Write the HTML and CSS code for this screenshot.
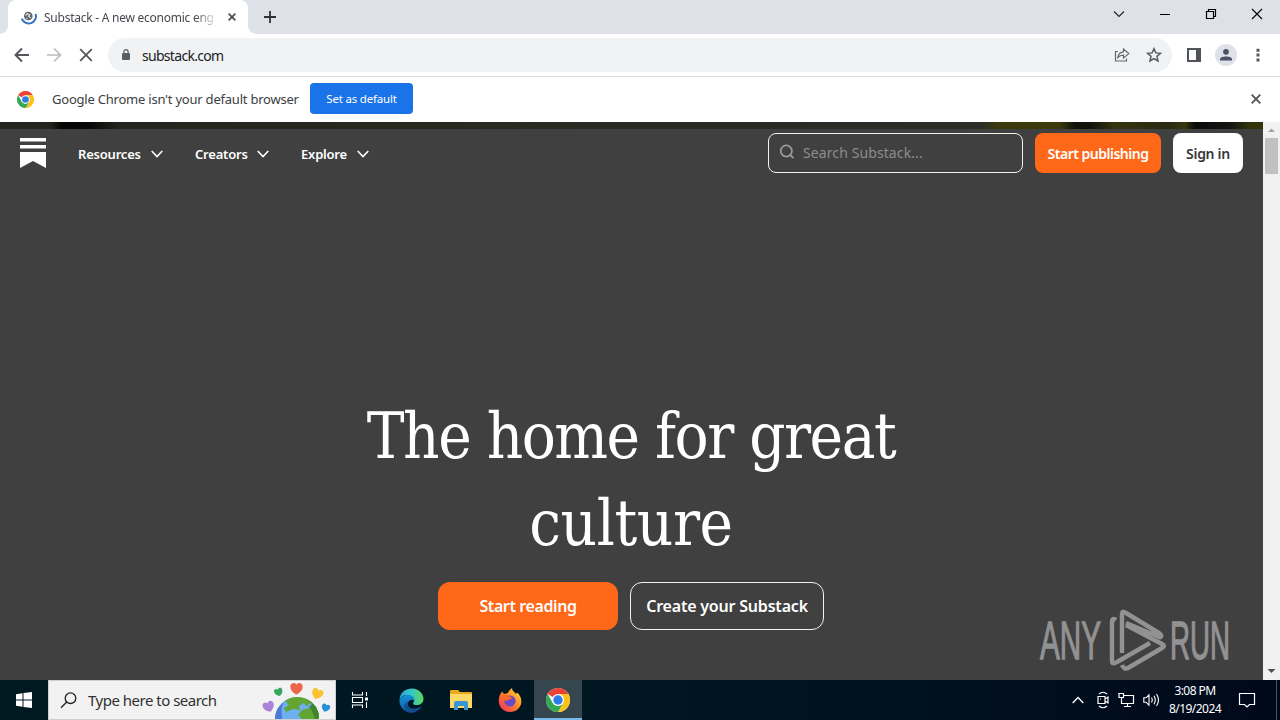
FILE: index.html
```html
<!DOCTYPE html>
<html lang="en">
<head>
    <meta charset="UTF-8">
    <meta name="viewport" content="width=device-width, initial-scale=1.0">
    <title>Substack - A new economic engine for culture</title>
    <link rel="stylesheet" href="styles.css">
</head>
<body>
    <svg class="defs" width="0" height="0">
        <symbol id="chrome" viewBox="0 0 24 24">
            <circle cx="12" cy="12" r="12" fill="#fff"/>
            <path d="M12 12 L1.6 6 A12 12 0 0 1 22.4 6 L12 6z" fill="#ea4335"/>
            <path d="M12 6 H22.4 A12 12 0 0 1 12 24 L17.2 15z" fill="#fbc116"/>
            <path d="M1.6 6 A12 12 0 0 0 12 24 L17.2 15 L12 18 L6.8 15z" fill="#34a853"/>
            <circle cx="12" cy="12" r="6" fill="#fff"/>
            <circle cx="12" cy="12" r="4.7" fill="#2b7de9"/>
        </symbol>
        <symbol id="chevron" viewBox="0 0 12 8">
            <path d="M.7 1 L6 6.5 L11.3 1" fill="none" stroke="currentColor" stroke-width="1.6"/>
        </symbol>
        <symbol id="heart" viewBox="0 0 12 12">
            <path d="M6 11.5 C3 10 .3 7.500 .3 4.300 C.3 .5 4.800 0 6 2.600 C7.200 0 11.700 .5 11.700 4.300 C11.700 7.500 9 10 6 11.500z" fill="currentColor"/>
        </symbol>
    </svg>

    <div class="tabstrip">
        <div class="tab">
            <svg width="16" height="16" viewBox="0 0 16 16">
                <circle cx="7.300" cy="7" r="4.300" fill="#5f6368"/>
                <path d="M4.500 6.500 l2 -1.800 l2.300 1 l-1.300 1.500 l2.200 1.600 M5 9 l1.500 .5" fill="none" stroke="#dfe1e5" stroke-width="1.200"/>
                <path d="M.8 9.500 A7 7 0 0 0 14.600 5" fill="none" stroke="#3674c9" stroke-width="2"/>
            </svg>
            <span class="tab-title">Substack - A new economic eng</span>
            <svg class="tab-close" width="8" height="8" viewBox="0 0 8 8"><path d="M.6 .6 L7.400 7.400 M7.400 .6 L.6 7.400" stroke="#45484d" stroke-width="1.600"/></svg>
        </div>
        <svg class="new-tab" width="12" height="12" viewBox="0 0 12 12"><path d="M6 0 V12 M0 6 H12" stroke="#303238" stroke-width="1.800"/></svg>
        <div class="window-buttons">
            <svg width="12" height="12" viewBox="0 0 12 12"><path d="M1 3.500 L6 8.500 L11 3.500" fill="none" stroke="#222" stroke-width="1.100"/></svg>
            <svg width="12" height="12" viewBox="0 0 12 12"><path d="M1 6.500 H11" stroke="#000"/></svg>
            <svg width="12" height="12" viewBox="0 0 12 12"><path d="M1.500 3.500 H8.500 V10.500 H1.500z M3.500 3.500 V1.500 H10.500 V8.500 H8.500" fill="none" stroke="#000" stroke-width="1.200"/></svg>
            <svg width="12" height="12" viewBox="0 0 12 12"><path d="M1 1 L11 11 M11 1 L1 11" stroke="#000" stroke-width="1.100"/></svg>
        </div>
    </div>

    <div class="toolbar">
        <div class="nav-buttons">
            <svg width="16" height="16" viewBox="0 0 16 16"><path d="M15 8 H2 M8 1.500 L1.500 8 L8 14.500" fill="none" stroke="#53565b" stroke-width="1.900"/></svg>
            <svg width="16" height="16" viewBox="0 0 16 16"><path d="M1 8 H14 M8 1.500 L14.500 8 L8 14.500" fill="none" stroke="#babcbe" stroke-width="1.700"/></svg>
            <svg width="16" height="16" viewBox="0 0 16 16"><path d="M2.200 2.200 L13.800 13.800 M13.800 2.200 L2.200 13.800" stroke="#53565b" stroke-width="1.800"/></svg>
        </div>
        <div class="omnibox">
            <svg width="8" height="12" viewBox="0 0 8 12"><rect y="4" width="8" height="7" rx="1" fill="#5a5d62"/><path d="M1.900 4.500 V2.800 a2.100 2.100 0 0 1 4.200 0 V4.500" fill="none" stroke="#5a5d62" stroke-width="1.200"/></svg>
            <span class="url">substack.com</span>
            <svg class="share" width="16" height="16" viewBox="0 0 16 16"><path d="M4 4.500 H1.500 V14 H12.500 V11.500 M3.800 10.500 C4.300 6.500 6.500 5 9.500 4.800 V2 L14.800 6.600 L9.500 11 V8.200 C7 8.200 5.300 8.800 3.800 10.500z" fill="none" stroke="#64676c" stroke-width="1.200"/></svg>
            <svg width="16" height="16" viewBox="0 0 16 16"><path d="M8 1.700 L9.900 5.900 L14.500 6.300 L11 9.300 L12 13.900 L8 11.500 L4 13.900 L5 9.300 L1.500 6.300 L6.100 5.900z" fill="none" stroke="#55585e" stroke-width="1.500"/></svg>
        </div>
        <svg class="panel" width="14" height="14" viewBox="0 0 14 14"><path d="M1 1 H13 V13 H1z" fill="none" stroke="#505359" stroke-width="2"/><path d="M9 1 H13 V13 H9z" fill="#505359"/></svg>
        <svg class="avatar" width="22" height="22" viewBox="0 0 22 22"><circle cx="11" cy="11" r="11" fill="#dee1e8"/><circle cx="11" cy="7.800" r="2.900" fill="#4b5266"/><path d="M5 16.500 V15 C5 11.500 17 11.500 17 15 V16.500z" fill="#4b5266"/></svg>
        <svg class="dots" width="4" height="14" viewBox="0 0 4 14"><path d="M.5 .8 h3 v3 h-3z M.5 5.600 h3 v3 h-3z M.5 10.400 h3 v3 h-3z" fill="#55585d"/></svg>
    </div>

    <div class="infobar">
        <svg width="17" height="17"><use href="#chrome"/></svg>
        <span class="info-text">Google Chrome isn't your default browser</span>
        <button class="default-button">Set as default</button>
        <svg class="info-close" width="10" height="10" viewBox="0 0 10 10"><path d="M.7 .7 L9.300 9.300 M9.300 .7 L.7 9.300" stroke="#505357" stroke-width="1.800"/></svg>
    </div>

    <div class="viewport">
        <main class="page">
            <div class="photo-strip"></div>
            <header class="header">
                <svg class="logo" width="26" height="30" viewBox="0 0 26 30"><path d="M0 0 H26 V3.500 H0z M0 7 H26 V10.500 H0z M0 14 H26 V30 L13 23 L0 30z" fill="#fff"/></svg>
                <nav class="menu">
                    <a class="menu-item resources">Resources <svg width="12" height="8"><use href="#chevron"/></svg></a>
                    <a class="menu-item creators">Creators <svg width="12" height="8"><use href="#chevron"/></svg></a>
                    <a class="menu-item explore">Explore <svg width="12" height="8"><use href="#chevron"/></svg></a>
                </nav>
                <div class="search">
                    <svg width="16" height="16" viewBox="0 0 16 16"><circle cx="7.300" cy="7" r="5.600" fill="none" stroke="#999" stroke-width="1.800"/><path d="M11.300 11 L14.500 14.200" stroke="#999" stroke-width="1.800"/></svg>
                    <span>Search Substack...</span>
                </div>
                <button class="button publish">Start publishing</button>
                <button class="button sign-in">Sign in</button>
            </header>
            <section class="hero">
                <h1><span class="line">The home for great</span><span class="line culture">culture</span></h1>
                <div class="actions">
                    <button class="action reading">Start reading</button>
                    <button class="action create">Create your Substack</button>
                </div>
            </section>
            <svg class="watermark" width="206" height="66" viewBox="0 0 206 66">
                <g fill="#929292" stroke="#929292" stroke-width="1.300">
                    <text x="2" y="51" textLength="61" lengthAdjust="spacingAndGlyphs">ANY</text>
                    <text x="132" y="51" textLength="60" lengthAdjust="spacingAndGlyphs">RUN</text>
                </g>
                <g fill="none" stroke="#929292" stroke-width="4.400" stroke-linejoin="round">
                    <path d="M78 12 C75 10 74 11 74 14 V53 C74 56 76 56 79 54 L112 35"/>
                    <path d="M84 45 V7 C84 3 85 3 88 5 L121 25 C125 28 123 31 119 28 L88 15"/>
                    <path d="M88 17 L124 36 Q128 38 124 40 L90 60 Q86 62 84 57"/>
                </g>
            </svg>
        </main>
        <div class="scrollbar">
            <svg width="17" height="16" viewBox="0 0 17 16"><path d="M5 10 L8.500 6.500 L12 10z" fill="#a3a3a3"/></svg>
            <div class="thumb"></div>
            <svg class="down" width="17" height="17" viewBox="0 0 17 17"><path d="M4.500 6 L8.500 10 L12.500 6z" fill="#505050"/></svg>
        </div>
    </div>

    <footer class="taskbar">
        <div class="start">
            <svg width="16" height="16" viewBox="0 0 16 16"><path d="M0 2.200 L6.500 1.300 V7.500 H0z M7.500 1.100 L16 0 V7.500 H7.500z M0 8.500 H6.500 V14.700 L0 13.800z M7.500 8.500 H16 V16 L7.500 14.900z" fill="#fff"/></svg>
        </div>
        <div class="task-search">
            <svg width="17" height="17" viewBox="0 0 17 17"><circle cx="10.500" cy="6.200" r="5.300" fill="none" stroke="#222" stroke-width="1.300"/><path d="M6.700 10 L1 15.700" stroke="#222" stroke-width="1.300"/></svg>
            <span>Type here to search</span>
            <svg class="globe" width="72" height="38" viewBox="0 0 72 38">
                <circle cx="35" cy="38" r="22" fill="#6eafef"/>
                <path d="M13 36 A22 22 0 0 1 22 21 C18 27 20 33 20 38 H13z" fill="#4c79d8"/>
                <path d="M23 20 C29 15 38 15 45 18 L49 22 L45 25 L41 22 L37 25 L38 29 L31 28 L24 31 L22 27 L27 24z M40 29 L47 27 L52 31 L57 32 L57 38 H40 L36 34z" fill="#62a532"/>
                <path d="M45 18 Q57 24 57 37 L53 38 L50 30 L47 26 L50 23z" fill="#41832f"/>
                <use class="red" href="#heart" x="28" y="1" width="13" height="13"/>
                <use class="green" href="#heart" width="9" height="9" transform="translate(11 8) rotate(-16)"/>
                <use class="yellow" href="#heart" width="12" height="12" transform="translate(52 5) rotate(22)"/>
                <use class="purple" href="#heart" width="12" height="12" transform="translate(-1 22) rotate(-20)"/>
                <use class="blue" href="#heart" width="9" height="9" transform="translate(61 21) rotate(20)"/>
            </svg>
        </div>
        <div class="apps">
            <div class="app task-view"><svg width="18" height="18" viewBox="0 0 18 18"><path d="M1.500 1 V4 H11.500 V1 M1.500 6.500 H11.500 V11.500 H1.500z M1.500 17 V14 H11.500 V17 M15.500 1 V5 M15.500 11 V17" fill="none" stroke="#fff" stroke-width="1.100"/><path d="M14 6.500 h3 v3 h-3z" fill="#fff"/></svg></div>
            <div class="app">
                <svg width="25" height="25" viewBox="0 0 25 25">
                    <defs>
                        <linearGradient id="edge-top"><stop offset="0" stop-color="#27a5df"/><stop offset=".5" stop-color="#36c6c9"/><stop offset="1" stop-color="#60d957"/></linearGradient>
                        <linearGradient id="edge-low" x2="0" y2="1"><stop offset="0" stop-color="#1592d4"/><stop offset="1" stop-color="#1158a9"/></linearGradient>
                    </defs>
                    <path d="M.5 12 C1 4 7 .5 13 .5 C20 .5 24.500 6 24.500 11 C24.500 15 21 17 17.500 17 C14 17 13.500 15.500 14.800 14 C17 10 12 7 8 7 C4 7 1.500 9 .5 12z" fill="url(#edge-top)"/>
                    <path d="M.5 12 C1.500 9 5 7 8.500 7 C13 7 16 9.500 15 13 C14 11 10 11.500 9 15 C8 20 15 23 22.500 18.500 C19 24 13 25.500 9 24 C3 22 .2 17 .5 12z" fill="url(#edge-low)"/>
                    <path d="M9 14 C7 20 14 23.500 22.500 18.500 C19 24 13 25.500 9 24 C3 20 5 15 9 14z" fill="#154b91"/>
                </svg>
            </div>
            <div class="app"><svg width="22" height="20" viewBox="0 0 22 20"><path d="M0 1 Q0 0 1 0 H8 L10 2 H21 Q22 2 22 3 V18 H0z" fill="#e9a91f"/><path d="M0 4 H22 V18 H0z" fill="#ffd968"/><path d="M4 20 V13 Q4 11 6 11 H16 Q18 11 18 13 V20 H14 V16 H8 V20z" fill="#3b95d2"/></svg></div>
            <div class="app">
                <svg width="24" height="24" viewBox="0 0 24 24">
                    <defs><linearGradient id="fire" x1="1" y1="0" x2="0" y2="1"><stop offset="0" stop-color="#ffe43c"/><stop offset=".5" stop-color="#ff8126"/><stop offset="1" stop-color="#f0226c"/></linearGradient></defs>
                    <path d="M4 3.500 L6 6 L10 5 C11 2 13 1 14 0 C14 3 17 4 18 6 L19 4.500 C22 7 23.500 10 23.300 14 C23 20 18 24 12 24 C5.500 24 .7 19 .7 13 C.7 9 2 6 4 3.500z" fill="url(#fire)"/>
                    <circle cx="12" cy="13" r="5.600" fill="#6949c7"/>
                    <path d="M5 8 C9 6 11 7 12 9 L14.500 10 C13 12 10 11 9 13 C7 13 5 11 5 8z" fill="#fa692b"/>
                </svg>
            </div>
            <div class="app active"><svg width="24" height="24"><use href="#chrome"/></svg></div>
        </div>
        <div class="tray">
            <svg width="12" height="8" viewBox="0 0 12 8"><path d="M.7 7 L6 1.500 L11.300 7" fill="none" stroke="#fff" stroke-width="1.300"/></svg>
            <svg width="12" height="18" viewBox="0 0 12 18"><path d="M2 3 Q6 -.5 10 3 M2 15 Q6 18.500 10 15 M1 5.500 H8 V12.500 H1z M8 8 L11 6 V12 L8 10" fill="none" stroke="#fff" stroke-width="1.200"/><path d="M3 8 h1" stroke="#fff"/></svg>
            <svg width="17" height="16" viewBox="0 0 17 16"><path d="M6 3.500 H15.500 V11.500 H3.500 V8 M9.500 12 V14.500 M6 14.500 H13 M1 1.500 H5.500 V5.500 H1z M3.500 5.500 V9" fill="none" stroke="#fff" stroke-width="1.200"/></svg>
            <svg width="17" height="14" viewBox="0 0 17 14"><path d="M.8 4.800 H3 L6 1.800 V12.200 L3 9.200 H.8z M8.500 4.500 Q10 7 8.500 9.500 M11 2.800 Q13.500 7 11 11.200 M13.500 1 Q17.500 7 13.500 13" fill="none" stroke="#fff" stroke-width="1.100"/></svg>
            <div class="clock"><span class="time">3:08 PM</span><span class="date">8/19/2024</span></div>
            <svg width="18" height="18" viewBox="0 0 18 18"><path d="M1.500 2.500 H16.500 V13.500 H11.500 L9 16 L6.500 13.500 H1.500z" fill="none" stroke="#fff" stroke-width="1.200"/></svg>
        </div>
    </footer>
</body>
</html>
```
FILE: styles.css
```css
* {
    box-sizing: border-box;
}
body {
    margin: 0;
    width: 1280px;
    height: 720px;
    overflow: hidden;
    display: flex;
    flex-direction: column;
    font-family: "Noto Sans", "Open Sans", sans-serif;
    background-color: #fff;
}
svg {
    display: block;
    flex-shrink: 0;
}
button {
    font-family: inherit;
    border: none;
    padding: 0;
    white-space: nowrap;
}
.defs {
    position: absolute;
}
.tabstrip {
    height: 34px;
    flex-shrink: 0;
    display: flex;
    align-items: center;
    padding-left: 8px;
    background-color: #dee1e8;
}
.tab {
    position: relative;
    width: 240px;
    height: 34px;
    display: flex;
    align-items: center;
    padding-left: 13px;
    border-radius: 8px 8px 0 0;
    background-color: #fff;
}
.tab::before,
.tab::after {
    content: "";
    position: absolute;
    bottom: 0;
    width: 8px;
    height: 8px;
}
.tab::before {
    left: -8px;
    background: radial-gradient(circle at 0 0, transparent 7.5px, #fff 8px);
}
.tab::after {
    right: -8px;
    background: radial-gradient(circle at 100% 0, transparent 7.5px, #fff 8px);
}
.tab-title {
    width: 171px;
    margin-left: 7px;
    overflow: hidden;
    white-space: nowrap;
    font-size: 12px;
    letter-spacing: -0.25px;
    color: #45484d;
    -webkit-mask-image: linear-gradient(90deg, #000 88%, transparent 102%);
}
.tab-close {
    margin-left: 13px;
}
.new-tab {
    margin-left: 16px;
}
.window-buttons {
    display: flex;
    gap: 34px;
    margin-left: auto;
    margin-right: 17px;
    margin-bottom: 6px;
}
.toolbar {
    height: 43px;
    flex-shrink: 0;
    display: flex;
    align-items: center;
    padding-left: 14px;
    border-bottom: 1px solid #d9dadc;
}
.nav-buttons {
    display: flex;
    gap: 16px;
}
.omnibox {
    width: 1064px;
    height: 34px;
    display: flex;
    align-items: center;
    margin-left: 14px;
    padding: 0 10px 0 14px;
    border-radius: 17px;
    background-color: #f0f2f4;
}
.url {
    margin-left: 12px;
    font-size: 14px;
    letter-spacing: -0.7px;
    color: #202124;
}
.share {
    margin-left: auto;
    margin-right: 16px;
}
.panel {
    margin-left: 15px;
}
.avatar {
    margin-left: 14px;
}
.dots {
    margin-left: 19px;
}
.infobar {
    height: 45px;
    flex-shrink: 0;
    display: flex;
    align-items: center;
    padding: 0 19px 1px 17px;
}
.info-text {
    width: 246px;
    margin-left: 18px;
    white-space: nowrap;
    font-size: 13px;
    letter-spacing: -0.22px;
    color: #3c4043;
}
.default-button {
    width: 103px;
    height: 31px;
    margin-left: 12px;
    margin-bottom: 1px;
    padding-bottom: 1px;
    border-radius: 4px;
    background-color: #1a73e8;
    color: #fff;
    font-size: 11.5px;
    letter-spacing: -0.2px;
}
.info-close {
    margin-left: auto;
}
.viewport {
    flex: 1;
    display: flex;
    min-height: 0;
}
.page {
    position: relative;
    width: 1263px;
    background-color: #404040;
    color: #fff;
}
.photo-strip {
    height: 7px;
    background: linear-gradient(90deg, #24251f 0, #24251f 50px, #050505 62px, #080808 90px, #24251f 120px, #28271f 300px, #2b2a24 600px, #2b2d27 980px, #3b3a0b 1000px, #3b3a0b 1060px, #10130b 1075px, #10130b 1090px, #34340c 1115px, #292a12 1170px, #37380e 1185px, #080b09 1195px, #121510 1230px, #35350c 1250px);
}
.header {
    height: 48px;
    display: flex;
    align-items: center;
    padding: 0 20px;
}
.logo {
    width: 26px;
}
.menu {
    display: flex;
    margin-left: 32px;
    padding-top: 2px;
}
.menu-item {
    display: flex;
    align-items: center;
    justify-content: space-between;
    font-size: 13px;
    font-weight: 600;
    white-space: nowrap;
    letter-spacing: -0.2px;
}
.resources {
    width: 85px;
    margin-right: 32px;
}
.creators {
    width: 74px;
    margin-right: 32px;
}
.explore {
    width: 68px;
}
.search {
    width: 255px;
    height: 40px;
    display: flex;
    align-items: center;
    gap: 8px;
    margin-left: auto;
    padding-left: 10px;
    padding-bottom: 2px;
    border: 1px solid #f2f2f2;
    border-radius: 8px;
    font-size: 14px;
    letter-spacing: 0.1px;
    color: #8d8d8d;
}
.button {
    height: 40px;
    margin-left: 12px;
    border-radius: 8px;
    font-size: 14px;
    font-weight: 600;
    letter-spacing: -0.5px;
}
.publish {
    width: 126px;
    background-color: #ff6719;
    color: #fff;
}
.sign-in {
    width: 70px;
    background-color: #fff;
    color: #363737;
    letter-spacing: -0.3px;
}
.hero {
    display: flex;
    flex-direction: column;
    align-items: center;
    padding-top: 216px;
    padding-right: 1px;
}
h1 {
    display: flex;
    flex-direction: column;
    align-items: center;
    margin: 0;
    font-family: "DejaVu Serif Condensed", "DejaVu Serif", serif;
    font-size: 63px;
    font-weight: normal;
    line-height: 87px;
}
.line {
    white-space: nowrap;
    letter-spacing: -1.5px;
}
.culture {
    letter-spacing: -0.4px;
}
.actions {
    display: flex;
    gap: 12px;
    margin-top: 15px;
}
.action {
    height: 48px;
    border-radius: 12px;
    color: #fff;
    font-size: 16px;
    font-weight: 600;
    letter-spacing: -0.4px;
}
.reading {
    width: 180px;
    background-color: #ff6719;
}
.create {
    width: 194px;
    border: 1px solid #f2f2f2;
    background-color: transparent;
    letter-spacing: -0.2px;
}
.watermark {
    position: absolute;
    right: 19px;
    bottom: 6px;
    font-family: "Liberation Sans", sans-serif;
    font-size: 53px;
}
.scrollbar {
    width: 17px;
    display: flex;
    flex-direction: column;
    align-items: center;
    background-color: #f1f1f1;
}
.thumb {
    width: 13px;
    height: 36px;
    background-color: #c1c1c1;
}
.down {
    margin-top: auto;
}
.taskbar {
    height: 40px;
    flex-shrink: 0;
    display: flex;
    background: linear-gradient(90deg, #001820 0, #001722 600px, #00091a 1280px);
}
.start {
    width: 48px;
    display: flex;
    align-items: center;
    justify-content: center;
}
.task-search {
    width: 288px;
    display: flex;
    align-items: center;
    padding-left: 11px;
    border: 1px solid #cdd0d1;
    background-color: #f2f2f2;
    color: #303030;
    font-size: 15px;
    letter-spacing: -0.5px;
}
.task-search span {
    margin-left: 11px;
}
.globe {
    margin-left: auto;
    margin-right: 1px;
}
.red {
    color: #ed654b;
}
.green {
    color: #35a65a;
}
.yellow {
    color: #fbc330;
}
.purple {
    color: #ac82d9;
}
.blue {
    color: #268fda;
}
.apps {
    display: flex;
}
.app {
    width: 49px;
    display: flex;
    align-items: center;
    justify-content: center;
}
.task-view {
    width: 48px;
    margin-right: 3px;
}
.active {
    width: 48px;
    border-bottom: 2px solid #76b9ed;
    padding-top: 2px;
    background-color: #36464e;
}
.tray {
    display: flex;
    align-items: center;
    margin-left: auto;
    padding-right: 20px;
    gap: 8px;
    margin-right: 3px;
    border-right: 1px solid #46515e;
}
.tray svg:first-child {
    margin-right: 5px;
}
.tray svg:nth-child(2) {
    margin-right: 1px;
}
.clock {
    width: 52px;
    display: flex;
    flex-direction: column;
    align-items: center;
    margin-left: 1px;
    margin-right: 9px;
    color: #fff;
    font-size: 12px;
    line-height: 18px;
    white-space: nowrap;
    letter-spacing: -0.55px;
}
```
